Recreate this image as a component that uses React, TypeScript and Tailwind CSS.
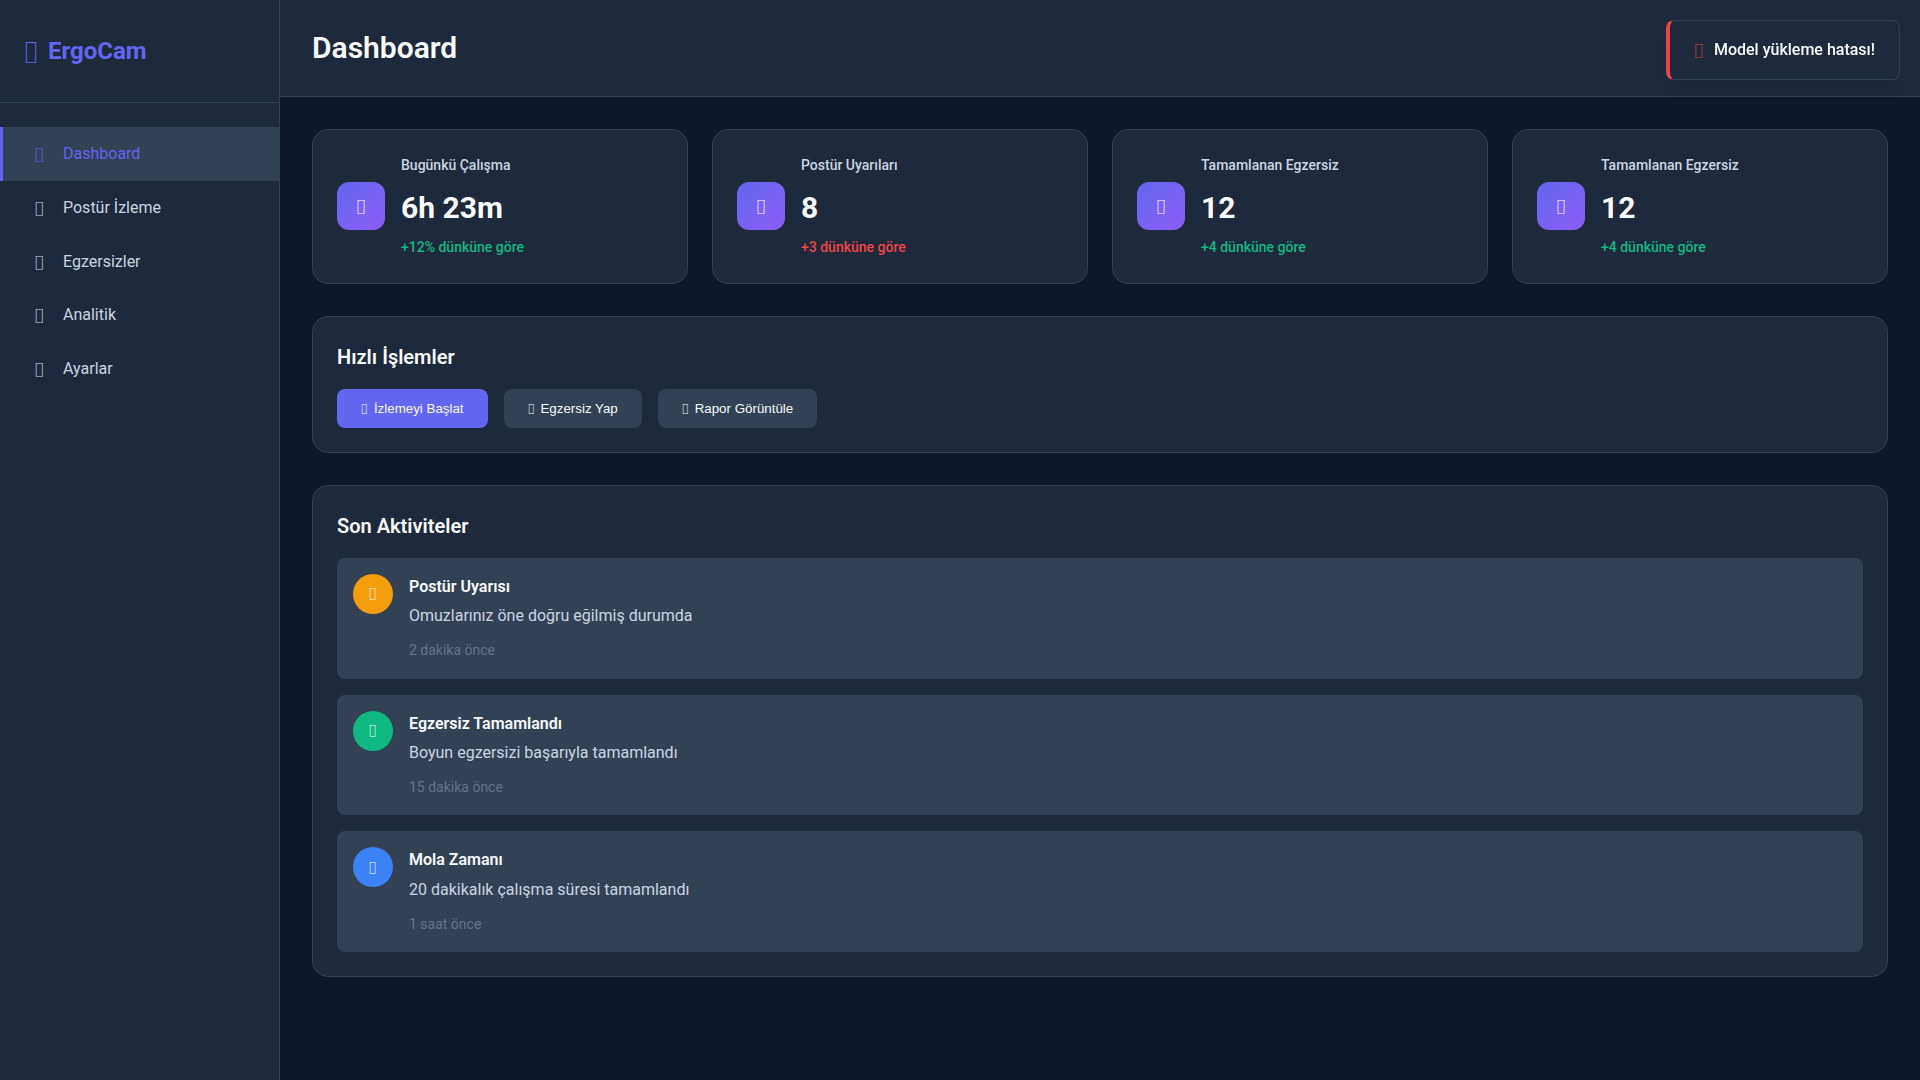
import React from "react";

const G = ({ c, className = "" }: { c: string; className?: string }) => (
  <span className={`inline-block scale-x-[0.85] font-['DejaVu_Sans',sans-serif] font-extralight ${className}`}>{c}</span>
);

const nav = [
  { c: "\uf3fd", t: "Dashboard", active: true },
  { c: "\uf21e", t: "Postür İzleme" },
  { c: "\uf44b", t: "Egzersizler" },
  { c: "\uf201", t: "Analitik" },
  { c: "\uf013", t: "Ayarlar" },
];

const stats = [
  { c: "\uf017", label: "Bugünkü Çalışma", value: "6h 23m", change: "+12% dünküne göre", up: true },
  { c: "\uf071", label: "Postür Uyarıları", value: "8", change: "+3 dünküne göre", up: false },
  { c: "\uf058", label: "Tamamlanan Egzersiz", value: "12", change: "+4 dünküne göre", up: true },
  { c: "\uf058", label: "Tamamlanan Egzersiz", value: "12", change: "+4 dünküne göre", up: true },
];

const activities = [
  { c: "\uf071", bg: "bg-[#f59e0b]", title: "Postür Uyarısı", desc: "Omuzlarınız öne doğru eğilmiş durumda", time: "2 dakika önce" },
  { c: "\uf00c", bg: "bg-[#10b981]", title: "Egzersiz Tamamlandı", desc: "Boyun egzersizi başarıyla tamamlandı", time: "15 dakika önce" },
  { c: "\uf0f4", bg: "bg-[#3b82f6]", title: "Mola Zamanı", desc: "20 dakikalık çalışma süresi tamamlandı", time: "1 saat önce" },
];

const buttons = [
  { c: "\uf04b", t: "İzlemeyi Başlat", cls: "bg-[#6366f1]" },
  { c: "\uf44b", t: "Egzersiz Yap", cls: "bg-[#334155]" },
  { c: "\uf201", t: "Rapor Görüntüle", cls: "bg-[#334155]" },
];

export default function App() {
  return (
    <div className="flex h-screen overflow-hidden bg-[#0f172a] font-['Roboto',sans-serif] text-base leading-[1.6] text-[#f8fafc]">
      <aside className="w-[280px] shrink-0 border-r border-[#334155] bg-[#1e293b]">
        <div className="border-b border-[#334155] px-6 py-8">
          <div className="flex items-center gap-[9.6px] text-2xl leading-[1.6] font-bold text-[#6366f1]">
            <G c={"\uf030"} />
            <span>ErgoCam</span>
          </div>
        </div>
        <nav className="flex flex-col pt-6">
          {nav.map((n) => (
            <a
              key={n.t}
              className={`flex items-center gap-3 border-l-[3px] px-6 py-3.5 ${
                n.active ? "border-[#6366f1] bg-[#334155] text-[#6366f1]" : "border-transparent text-[#cbd5e1]"
              }`}
            >
              <G c={n.c} className="w-6 text-center" />
              <span>{n.t}</span>
            </a>
          ))}
        </nav>
      </aside>

      <main className="min-w-0 flex-1">
        <header className="flex items-center justify-between border-b border-[#334155] bg-[#1e293b] px-8 py-6">
          <h1 className="text-[30px] leading-[1.6] font-semibold">Dashboard</h1>
        </header>

        <div className="p-8">
          <div className="mb-8 grid grid-cols-4 gap-6">
            {stats.map((s, i) => (
              <div key={i} className="flex items-center gap-4 rounded-2xl border border-[#334155] bg-[#1e293b] p-6">
                <div className="flex h-12 w-12 shrink-0 items-center justify-center rounded-xl bg-linear-to-br from-[#6366f1] to-[#8b5cf6] text-base text-white">
                  <G c={s.c} />
                </div>
                <div>
                  <div className="mb-2 text-sm leading-[1.6] font-medium text-[#cbd5e1]">{s.label}</div>
                  <div className="mb-1 text-[30px] leading-[1.6] font-bold">{s.value}</div>
                  <div className={`text-sm leading-[1.6] font-medium ${s.up ? "text-[#10b981]" : "text-[#ef4444]"}`}>{s.change}</div>
                </div>
              </div>
            ))}
          </div>

          <section className="mb-8 rounded-2xl border border-[#334155] bg-[#1e293b] p-6">
            <h2 className="mb-4 text-xl leading-[1.6] font-semibold">Hızlı İşlemler</h2>
            <div className="flex gap-4">
              {buttons.map((b) => (
                <button
                  key={b.t}
                  className={`flex items-center gap-[6px] rounded-lg px-6 py-3 font-['Liberation_Sans',sans-serif] text-[13.333px] leading-[15px] text-[#f8fafc] ${b.cls}`}
                >
                  <G c={b.c} className="text-[11.5px]" />
                  <span>{b.t}</span>
                </button>
              ))}
            </div>
          </section>

          <section className="rounded-2xl border border-[#334155] bg-[#1e293b] p-6">
            <h2 className="mb-4 text-xl leading-[1.6] font-semibold">Son Aktiviteler</h2>
            <div className="flex flex-col gap-4">
              {activities.map((a) => (
                <div key={a.title} className="flex gap-4 rounded-lg bg-[#334155] p-4">
                  <div className={`flex h-10 w-10 shrink-0 items-center justify-center rounded-full text-[13px] text-white ${a.bg}`}>
                    <G c={a.c} />
                  </div>
                  <div>
                    <h4 className="mb-1 font-semibold">{a.title}</h4>
                    <p className="mb-2 text-[#cbd5e1]">{a.desc}</p>
                    <span className="text-sm text-[#64748b]">{a.time}</span>
                  </div>
                </div>
              ))}
            </div>
          </section>
        </div>
      </main>

      <div className="fixed top-5 right-5 flex items-center gap-2.5 rounded-lg border border-l-4 border-[#334155] border-l-[#ef4444] bg-[#1e293b] px-6 py-4 font-medium shadow-[0_10px_15px_-3px_rgba(0,0,0,0.1)]">
        <G c={"\uf071"} className="text-[#ef4444]" />
        <span>Model yükleme hatası!</span>
      </div>
    </div>
  );
}
